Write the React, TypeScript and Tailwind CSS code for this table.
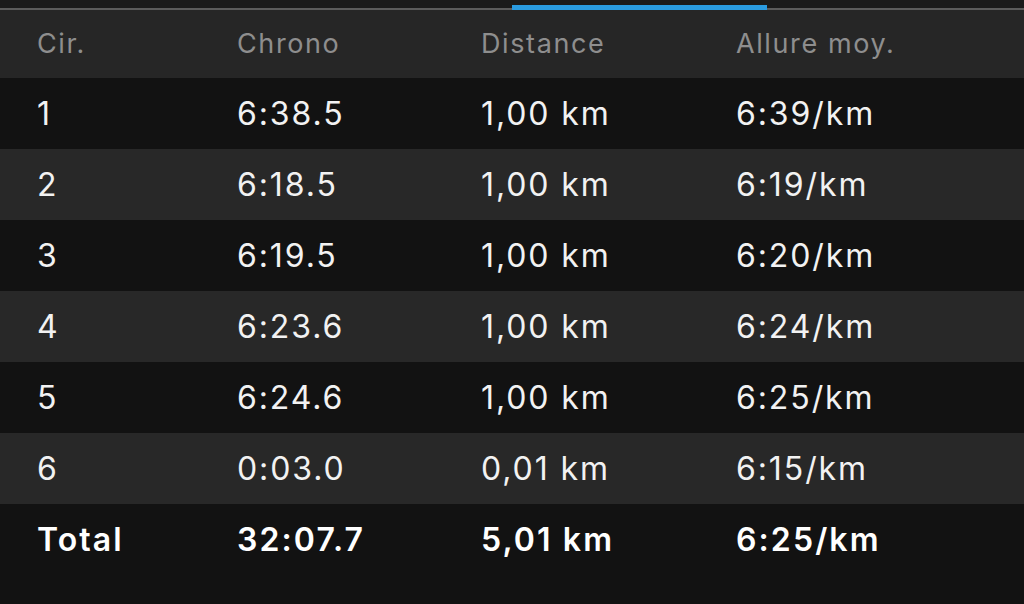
const rows = [
  ["1", "6:38.5", "1,00 km", "6:39/km"],
  ["2", "6:18.5", "1,00 km", "6:19/km"],
  ["3", "6:19.5", "1,00 km", "6:20/km"],
  ["4", "6:23.6", "1,00 km", "6:24/km"],
  ["5", "6:24.6", "1,00 km", "6:25/km"],
  ["6", "0:03.0", "0,01 km", "6:15/km"],
];

const cols = "grid grid-cols-[200px_244px_255px_1fr] pl-[37px] items-center";

const App = () => {
  return (
    <div
      className="w-[1024px] h-[604px] bg-[#121212] overflow-hidden"
      style={{ fontFamily: "Inter, 'Noto Sans', sans-serif" }}
    >
      <div className="flex items-end h-[10px] bg-[#1b1b1b]">
        <div className="w-[512px] h-[2px] bg-[#5c5c5c]" />
        <div className="w-[255px] h-[5px] bg-[#2a9be0]" />
        <div className="flex-1 h-[2px] bg-[#5c5c5c]" />
      </div>
      <div className={`${cols} h-[68px] bg-[#262626] text-[#8e8e8e] text-[27px] tracking-[1.6px]`}>
        <span>Cir.</span>
        <span>Chrono</span>
        <span>Distance</span>
        <span>Allure moy.</span>
      </div>
      {rows.map((r, i) => (
        <div
          key={r[0]}
          className={`${cols} h-[71px] text-[#f2f2f2] text-[32px] tracking-[1.9px] ${
            i % 2 === 0 ? "bg-[#121212]" : "bg-[#282828]"
          }`}
        >
          {r.map((c, j) => (
            <span key={j}>{c}</span>
          ))}
        </div>
      ))}
      <div className={`${cols} h-[71px] text-white text-[32px] font-semibold tracking-[2.1px]`}>
        <span>Total</span>
        <span>32:07.7</span>
        <span>5,01 km</span>
        <span>6:25/km</span>
      </div>
    </div>
  );
};

export default App;
